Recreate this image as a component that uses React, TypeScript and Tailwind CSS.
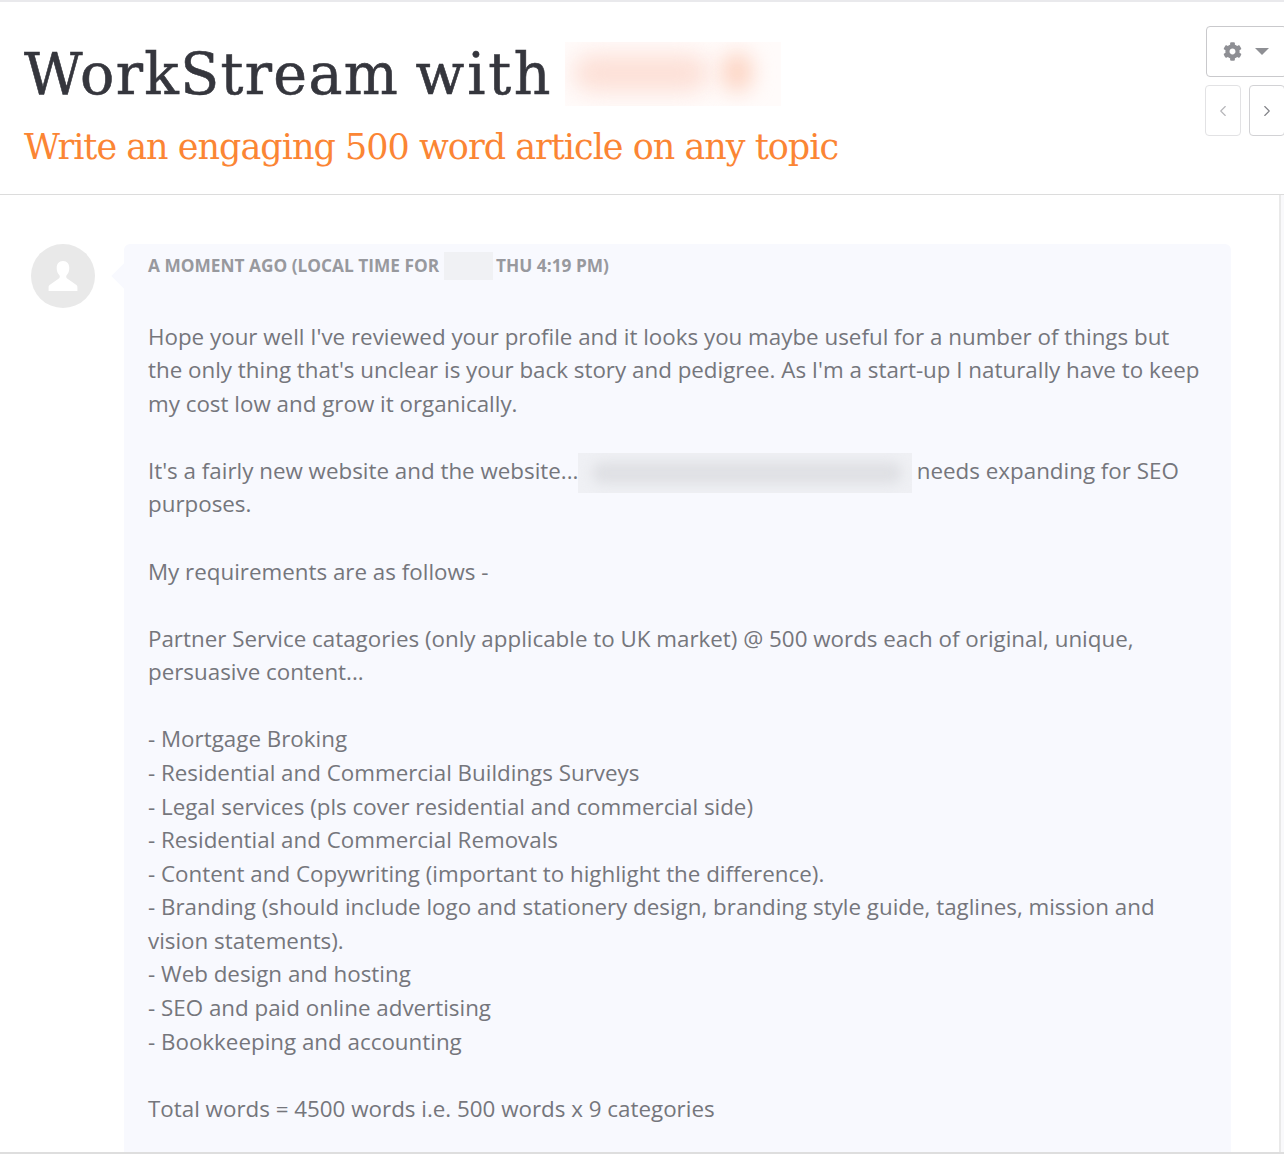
import { FaCog } from "react-icons/fa";
import { ChevronLeft, ChevronRight } from "lucide-react";

export default function App() {
  return (
    <div className="relative h-[1154px] w-[1284px] overflow-hidden bg-white font-['Open_Sans',sans-serif]">
      {/* Header */}
      <header className="flex h-[195px] justify-between border-t-2 border-b border-t-[#e9e9ec] border-b-[#dcdcdc]">
        <div className="pl-6 pt-[34px]">
          <div className="flex items-start">
            <h1 className="font-['DejaVu_Serif',serif] text-[57px] leading-[76px] tracking-[1.33px] [word-spacing:-3px] text-[#35363d] [-webkit-text-stroke:0.6px_#35363d]">
              WorkStream <span className="tracking-[2.8px]">with</span>
            </h1>
            <div className="relative mt-[6px] ml-[12px] h-[64px] w-[216px] overflow-hidden bg-[#fffbfa]">
              <div className="absolute top-[12px] left-[8px] h-[38px] w-[136px] rounded-full bg-[#fde0d7] blur-[11px]" />
              <div className="absolute top-[10px] left-[156px] h-[40px] w-[32px] rounded-full bg-[#fdd6c6] blur-[10px]" />
            </div>
          </div>
          <p className="mt-[11px] font-['DejaVu_Serif',serif] text-[35px] leading-[48px] font-light tracking-[-1px] text-[#fb8534]">
            Write an engaging 500 word article on any topic
          </p>
        </div>

        <div className="mr-[-3px] flex w-[81px] shrink-0 flex-col gap-2 pt-6">
          <button className="flex h-[51px] w-full items-center gap-[13px] rounded border border-[#c9c9cc] pl-[16px] text-[#8e8f94]">
            <FaCog className="size-[19px]" />
            <span className="h-0 w-0 border-x-[7px] border-t-[7px] border-x-transparent border-t-[#8e8f94]" />
          </button>
          <div className="ml-[-1px] flex gap-2">
            <button className="flex h-[51px] w-[36px] items-center justify-center rounded border border-[#e2e2e4] text-[#b5b5b9]">
              <ChevronLeft className="size-[18px]" strokeWidth={1.5} />
            </button>
            <button className="flex h-[51px] w-[36px] items-center justify-center rounded border border-[#d2d2d5] text-[#818287]">
              <ChevronRight className="size-[18px]" strokeWidth={1.5} />
            </button>
          </div>
        </div>
      </header>

      {/* Message */}
      <div className="flex h-[959px] overflow-hidden border-b-2 border-[#dedede]">
        <div className="flex flex-1 gap-[29px] pt-[49px] pl-[31px]">
          <div className="flex size-16 shrink-0 items-center justify-center rounded-full bg-[#e9e9e9]">
            <svg viewBox="0 0 32 32" className="size-[32px]" fill="#ffffff">
              <path d="M16 1c-4.2 0-6.3 3-6.3 7 0 3 1 5.6 2.7 7.3.6.7.5 2.2-.2 3L2.6 25c-.8.6-1 1.4-1 2.5V31h28.8v-3.5c0-1.1-.2-1.9-1-2.5l-9.6-6.7c-.7-.8-.8-2.3-.2-3 1.7-1.7 2.7-4.3 2.7-7.3 0-4-2.1-7-6.3-7z" />
            </svg>
          </div>
          <div className="relative h-[960px] w-[1107px] rounded-md bg-[#f8f9fe] px-6 pt-[8px]">
            <span className="absolute top-[23px] left-[-9px] size-[18px] rotate-45 bg-[#f8f9fe]" />
            <div className="relative flex h-[28px] items-center text-[17.3px] leading-[28px] font-bold text-[#98999e]">
              A MOMENT AGO (LOCAL TIME FOR
              <span className="mr-[3px] ml-[5px] inline-block h-[28px] w-[49px] bg-[#f0f1f4]" />
              THU 4:19 PM)
            </div>
            <div className="relative mt-[39.5px] text-[22.36px] leading-[33.58px] text-[#75767c]">
              Hope your well I've reviewed your profile and it looks you maybe useful for a number of things but the only thing that's unclear is your back story and pedigree. As I'm a start-up I naturally have to keep my cost low and grow it organically.
              <br />
              <br />
              It's a fairly new website and the website...
              <span className="relative my-[-12px] mr-[-1.5px] inline-block h-[40px] w-[334px] overflow-hidden bg-[#eff0f4] align-middle">
                <span className="absolute top-[9px] left-[14px] h-[22px] w-[310px] rounded-full bg-[#dfe0e4] blur-[6px]" />
              </span>{" "}
              needs expanding for SEO purposes.
              <br />
              <br />
              My requirements are as follows -
              <br />
              <br />
              Partner Service catagories (only applicable to UK market) @ 500 words each of original, unique, persuasive content...
              <br />
              <br />
              - Mortgage Broking
              <br />
              - Residential and Commercial Buildings Surveys
              <br />
              - Legal services (pls cover residential and commercial side)
              <br />
              - Residential and Commercial Removals
              <br />
              - Content and Copywriting (important to highlight the difference).
              <br />
              - Branding (should include logo and stationery design, branding style guide, taglines, mission and vision statements).
              <br />
              - Web design and hosting
              <br />
              - SEO and paid online advertising
              <br />
              - Bookkeeping and accounting
              <br />
              <br />
              Total words = 4500 words i.e. 500 words x 9 categories
            </div>
          </div>
        </div>
        <div className="w-[5px] shrink-0 border-l-2 border-[#e9e9e9] bg-[#f9f9fb]" />
      </div>
    </div>
  );
}
